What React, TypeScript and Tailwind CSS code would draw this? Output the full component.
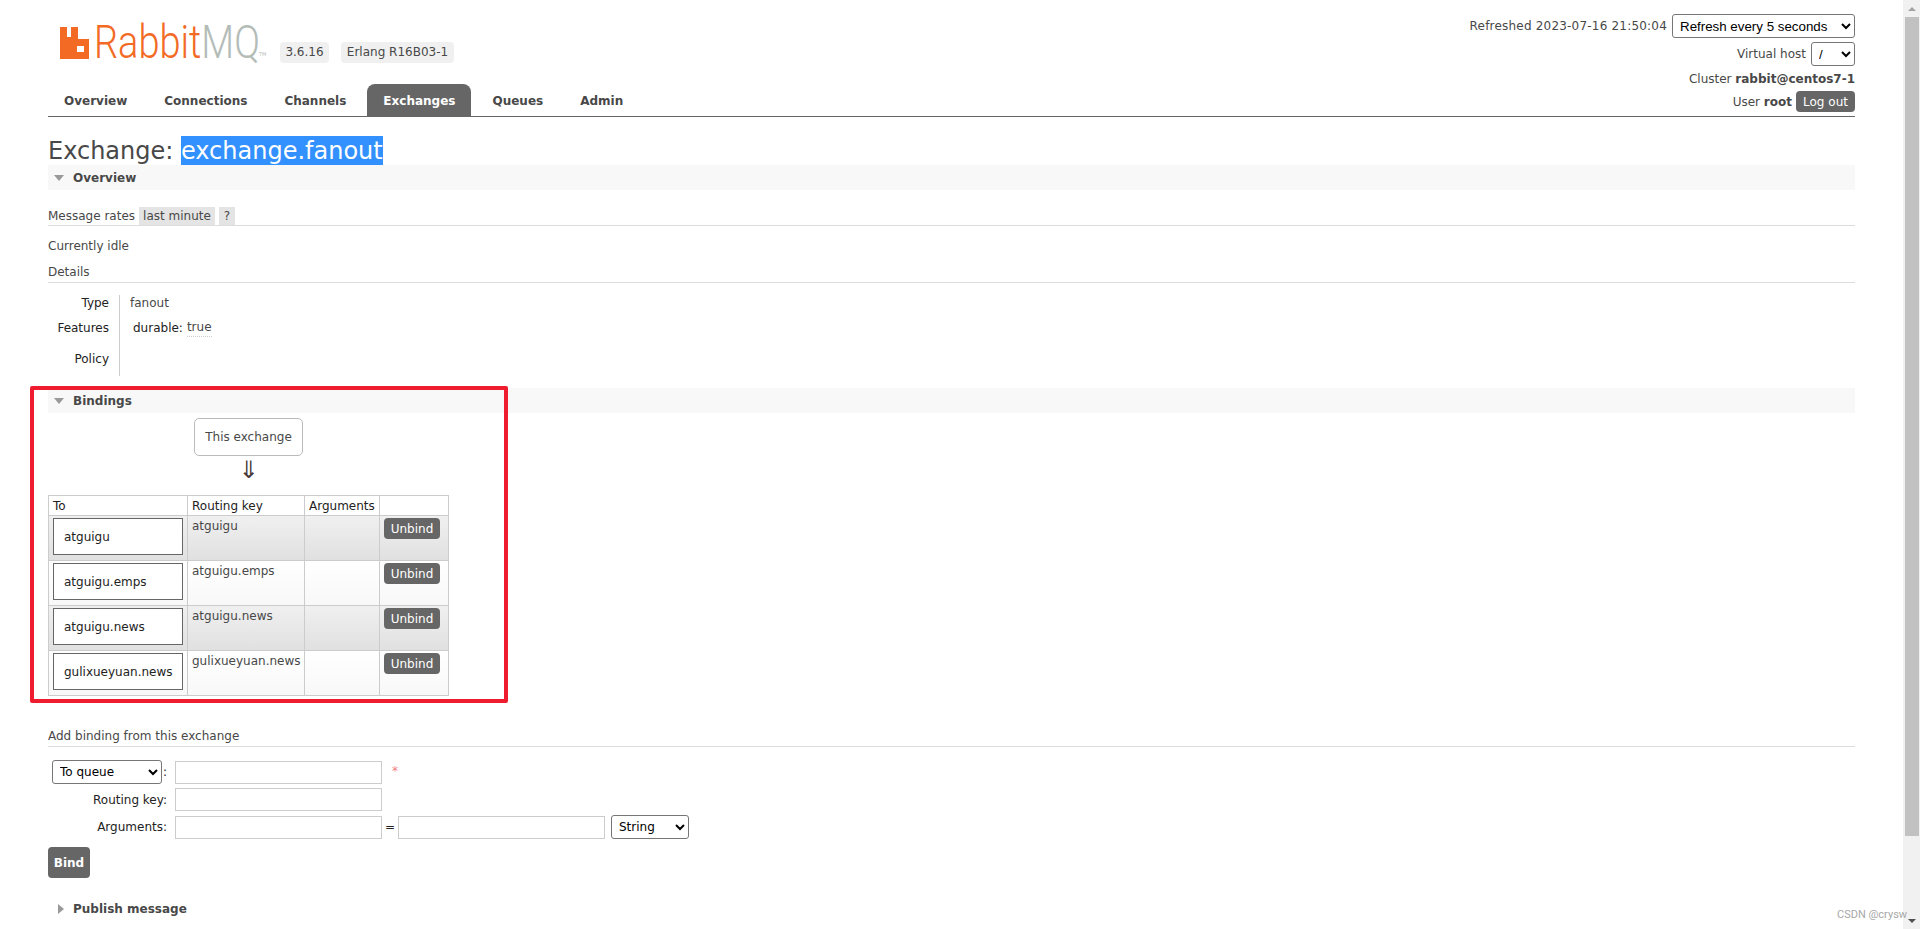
import React from 'react'

const tabs = ['Overview', 'Connections', 'Channels', 'Exchanges', 'Queues', 'Admin']
const bindings = ['atguigu', 'atguigu.emps', 'atguigu.news', 'gulixueyuan.news']

function SectionHeader({ title }: { title: string }) {
  return (
    <div className="flex h-[25px] items-center bg-[#f8f8f8] pl-[6px] font-bold text-[#484848]">
      <span className="mr-[9px] h-0 w-0 border-x-[5px] border-t-[6px] border-x-transparent border-t-[#999]" />
      {title}
    </div>
  )
}

function Row({ label, children, h }: { label?: string; children?: React.ReactNode; h: string }) {
  return (
    <div className={`flex items-center ${h}`}>
      <div className="w-[61px] text-right text-[#222]">{label}</div>
      <div className="ml-[10px] flex h-full items-center gap-[4px] border-l border-[#ccc] pl-[10px]">{children}</div>
    </div>
  )
}

export default function App() {
  return (
    <div className="relative flex h-[929px] overflow-hidden bg-white font-['DejaVu_Sans',sans-serif] text-[12px] text-[#484848]">
      <main className="min-w-0 flex-1 px-12">
        <header className="flex h-[117px] justify-between border-b border-[#666]">
          <div className="flex flex-col">
            <div className="flex h-[84px] items-start pl-[12px] pt-[26px]">
              <svg width="30" height="33" viewBox="0 0 30 33" className="shrink-0">
                <path
                  fill="#f26a24"
                  fillRule="evenodd"
                  d="M0 1h7v10h4V1h7v12h11v20H0zM17 20h7v6h-7z"
                />
              </svg>
              <span className="ml-[4px] flex h-[33px] w-[165px] items-center whitespace-nowrap font-['Roboto',sans-serif] text-[46px] font-light">
                <span className="origin-left scale-x-[0.825]">
                  <span className="text-[#f26a24]">Rabbit</span>
                  <span className="text-[#b4bcb8]">MQ</span>
                </span>
              </span>
              <span className="mt-[25px] w-[21px] text-[5px] text-[#b4bcb8]">TM</span>
              <span className="mt-[16px] w-[49px] rounded-[4px] bg-[#f0f0f0] py-[3px] text-center leading-[15px]">3.6.16</span>
              <span className="ml-[12px] mt-[16px] w-[113px] rounded-[4px] bg-[#f0f0f0] py-[3px] text-center leading-[15px]">Erlang R16B03-1</span>
            </div>
            <nav className="flex h-[32px] gap-[5px] font-bold">
              {tabs.map((tab) => (
                <a
                  key={tab}
                  className={
                    tab === 'Exchanges'
                      ? 'flex items-center rounded-t-[8px] bg-[#666] px-[16px] pt-[1px] text-white'
                      : 'flex items-center px-[16px] pt-[1px] text-[#484848]'
                  }
                >
                  {tab}
                </a>
              ))}
            </nav>
          </div>
          <div className="flex flex-col items-end pt-[14px]">
            <div className="flex h-[24px] items-center gap-[5px]">
              <span className="tracking-[0.2px]">Refreshed 2023-07-16 21:50:04</span>
              <select defaultValue="5" className="h-[24px] w-[183px] rounded-[3px] border border-[#767676] bg-white pl-[3px] font-['Liberation_Sans',sans-serif] text-[13.33px] text-black">
                <option value="5">Refresh every 5 seconds</option>
              </select>
            </div>
            <div className="mt-[4px] flex h-[24px] items-center gap-[5px]">
              Virtual host
              <select defaultValue="/" className="h-[24px] w-[44px] rounded-[3px] border border-[#767676] bg-white pl-[3px] font-['Liberation_Sans',sans-serif] text-[13.33px] text-black">
                <option value="/">/</option>
              </select>
            </div>
            <div className="mt-[2px] flex h-[22px] items-center">
              Cluster&nbsp;<b>rabbit@centos7-1</b>
            </div>
            <div className="flex h-[23px] items-center gap-[4px]">
              <span>
                User <b>root</b>
              </span>
              <span className="flex h-[21px] w-[59px] items-center justify-center rounded-[4px] bg-[#666] text-white">Log out</span>
            </div>
          </div>
        </header>

        <h1 className="mt-[19px] flex h-[29px] items-center whitespace-nowrap text-[24px] leading-[29px] text-[#484848]">
          <span className="pt-[1px]">Exchange:&nbsp;</span>
          <span className="h-[29px] bg-[#3390ff] pt-[1px] leading-[28px] text-white">exchange.fanout</span>
        </h1>
        <SectionHeader title="Overview" />

        <div className="mt-[17px] flex h-[19px] items-center gap-[4px] border-b border-[#ddd]">
          Message rates
          <span className="flex h-full items-center bg-[#e4e4e4] px-[4px]">last minute</span>
          <span className="flex h-full items-center bg-[#e4e4e4] px-[5px]">?</span>
        </div>
        <div className="mt-[11px] leading-[18px]">Currently idle</div>
        <div className="mt-[9px] h-[19px] border-b border-[#ddd] leading-[17px]">Details</div>

        <div className="mt-[12px]">
          <Row label="Type" h="h-[16px]">
            fanout
          </Row>
          <Row label="Features" h="h-[33px]">
            <span className="ml-[3px] text-[#222]">durable:</span>
            <span className="border-b border-dotted border-[#ccc]">true</span>
          </Row>
          <Row label="Policy" h="h-[30px]" />
          <Row h="h-[2px]" />
        </div>

        <div className="mt-[12px]">
          <SectionHeader title="Bindings" />
        </div>

        <div className="ml-[146px] mt-[5px] flex w-[109px] flex-col items-center text-[#484848]">
          <div className="flex h-[38px] w-[109px] items-center justify-center rounded-[5px] border border-[#bbb]">This exchange</div>
          <div className="h-[39px] pt-[1px] text-[24px] leading-[26px] text-[#4a3a3a]">⇓</div>
        </div>

        <table className="w-[400px] table-fixed border-collapse">
          <colgroup>
            <col className="w-[139px]" />
            <col className="w-[117px]" />
            <col className="w-[75px]" />
            <col className="w-[69px]" />
          </colgroup>
          <thead>
            <tr className="h-[20px] text-left text-[#222]">
              <th className="border border-[#ccc] px-[4px] font-normal">To</th>
              <th className="border border-[#ccc] px-[4px] font-normal">Routing key</th>
              <th className="border border-[#ccc] px-[4px] font-normal">Arguments</th>
              <th className="border border-[#ccc]" />
            </tr>
          </thead>
          <tbody>
            {bindings.map((name, i) => {
              const bg = i % 2 === 0 ? 'bg-linear-to-b from-[#f0f0f0] to-[#e0e0e0]' : 'bg-linear-to-b from-[#ffffff] to-[#f8f8f8]'
              return (
                <tr key={name} className={`h-[45px] ${bg}`}>
                  <td className="border border-[#ccc] px-[4px] pt-[2px] align-top">
                    <div className="flex h-[37px] w-[130px] items-center border border-[#666] bg-white pl-[10px] text-[#222]">{name}</div>
                  </td>
                  <td className="border border-[#ccc] px-[4px] pt-[1px] align-top whitespace-nowrap">{name}</td>
                  <td className="border border-[#ccc]" />
                  <td className="border border-[#ccc] pl-[4px] pt-[2px] align-top">
                    <span className="flex h-[21px] w-[56px] items-center justify-center rounded-[4px] bg-[#666] text-white">Unbind</span>
                  </td>
                </tr>
              )
            })}
          </tbody>
        </table>

        <div className="mt-[32px] h-[19px] border-b border-[#ddd] leading-[16px]">Add binding from this exchange</div>

        <div className="ml-[4px] mt-[13px] grid w-fit grid-cols-[123px_207px_16px_207px_auto] items-center gap-y-[4px] text-[#222]">
          <div className="flex items-center">
            <select defaultValue="queue" className="h-[24px] w-[110px] rounded-[3px] border border-[#767676] bg-white pl-[3px] text-black">
              <option value="queue">To queue</option>
            </select>
            <span className="ml-[1px]">:</span>
          </div>
          <input className="h-[23px] border border-[#ccc]" />
          <span className="col-span-3 pb-[2px] pl-[10px] text-[#f08080]">*</span>

          <div className="pr-[8px] text-right">Routing key:</div>
          <input className="h-[23px] border border-[#ccc]" />
          <span className="col-span-3" />

          <div className="pr-[8px] text-right">Arguments:</div>
          <input className="h-[23px] border border-[#ccc]" />
          <span className="flex justify-center">=</span>
          <input className="h-[23px] border border-[#ccc]" />
          <select defaultValue="string" className="ml-[6px] h-[24px] w-[78px] rounded-[3px] border border-[#767676] bg-white pl-[3px] text-black">
            <option value="string">String</option>
          </select>
        </div>

        <button className="mt-[8px] block h-[31px] w-[42px] rounded-[4px] bg-[#666] font-bold text-white">Bind</button>

        <div className="mt-[21px] flex h-[20px] items-center pl-[10px] font-bold text-[#484848]">
          <span className="mr-[9px] h-0 w-0 border-y-[5px] border-l-[6px] border-y-transparent border-l-[#999]" />
          Publish message
        </div>
      </main>

      <aside className="flex w-[17px] shrink-0 flex-col items-center bg-[#f1f1f1]">
        <div className="flex h-[17px] items-center justify-center">
          <span className="h-0 w-0 border-x-[4px] border-b-[4px] border-x-transparent border-b-[#a3a3a3]" />
        </div>
        <div className="h-[819px] w-[14px] bg-[#c1c1c1]" />
        <div className="mt-auto flex h-[17px] items-center justify-center">
          <span className="h-0 w-0 border-x-[4px] border-t-[4px] border-x-transparent border-t-[#505050]" />
        </div>
      </aside>

      <div className="pointer-events-none absolute left-[30px] top-[386px] h-[317px] w-[478px] rounded-[2px] border-[4px] border-[#ee1c2e]" />
      <div className="absolute left-[1837px] top-[907px] font-['Roboto',sans-serif] text-[11px] text-[#a8a8a8]">CSDN @crysw</div>
    </div>
  )
}
